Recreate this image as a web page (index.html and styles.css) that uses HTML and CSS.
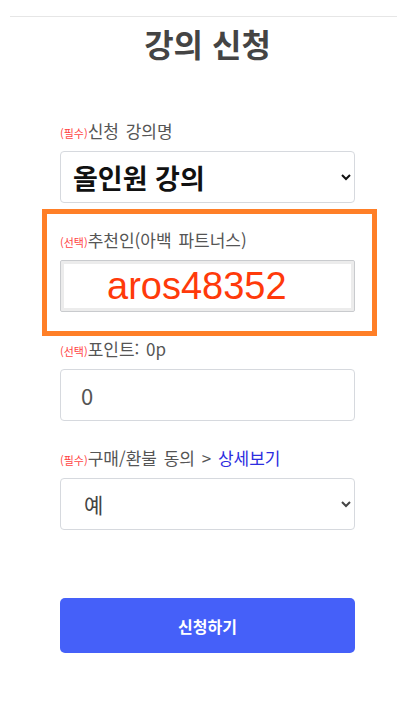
FILE: index.html
```html
<!DOCTYPE html>
<html lang="ko">
<head>
  <meta charset="UTF-8">
  <meta name="viewport" content="width=device-width, initial-scale=1.0">
  <title>강의 신청</title>
  <link rel="stylesheet" href="styles.css">
</head>
<body>
  <hr class="top-line">
  <h2 class="title">강의 신청</h2>
  <form class="apply-form" autocomplete="off">
    <div class="group">
      <label class="label" for="course"><span class="tag">(필수)</span>신청 강의명</label>
      <select id="course" class="field select-course">
        <option>올인원 강의</option>
      </select>
    </div>
    <div class="group marked">
      <label class="label" for="referrer"><span class="tag">(선택)</span>추천인(아백 파트너스)</label>
      <input id="referrer" class="field field-ref" type="text" value="aros48352">
      <span class="mark"></span>
    </div>
    <div class="group">
      <label class="label" for="point"><span class="tag">(선택)</span>포인트: 0p</label>
      <input id="point" class="field field-point" type="text" value="0">
    </div>
    <div class="group">
      <label class="label" for="agree"><span class="tag">(필수)</span>구매/환불 동의 &gt; <a class="more" href="#">상세보기</a></label>
      <select id="agree" class="field select-agree">
        <option>예</option>
      </select>
    </div>
    <button type="button" class="submit">신청하기</button>
  </form>
</body>
</html>
```

FILE: styles.css
```css
body { margin: 0; font-family: "Noto Sans CJK KR", "Noto Sans", sans-serif; background: #fff; color: #555; }
.top-line { margin: 16px 18px 0 10px; border: 0; border-top: 1px solid #e6e6e6; height: 0; }
.title { margin: 6px 0 0; font-size: 32px; line-height: 40px; font-weight: 700; color: #444; text-align: center; }
.apply-form { width: 295px; margin: 58px auto 0; }
.group { position: relative; margin-bottom: 27px; }
.label { display: block; font-size: 17px; line-height: 20px; height: 20px; margin-bottom: 10px; color: #555; white-space: nowrap; word-spacing: 2px; }
.tag { font-size: 11px; line-height: 10px; color: #f44; word-spacing: 0; }
.more { color: #2d2de0; text-decoration: none; }
.field { display: block; box-sizing: border-box; width: 100%; height: 52px; border: 1px solid #d6d9de; border-radius: 4px; background: #fff; font-family: inherit; color: #555; }
.select-course { padding: 0 6px 0 8px; font-size: 27px; font-weight: 700; color: #111; }
.select-agree { padding: 0 8px 0 19px; font-size: 21px; color: #444; }
.field-point { padding: 0 20px; font-size: 22px; color: #555; outline: none; }
.field-ref { border: 1px solid #c9cbce; border-radius: 2px; box-shadow: inset 0 0 0 3px #ececec; padding: 0 0 0 46px; font-family: "Liberation Sans", Arial, sans-serif; font-size: 38px; color: #ff3a0a; outline: none; }
.mark { position: absolute; left: -18px; right: -22px; top: -21px; bottom: -24px; border: 5px solid #ff7f27; pointer-events: none; }
.submit { display: block; width: 100%; height: 55px; margin-top: 68px; border: 0; border-radius: 5px; background: #4560f9; color: #fff; font-family: inherit; font-size: 16px; font-weight: 700; }
```
